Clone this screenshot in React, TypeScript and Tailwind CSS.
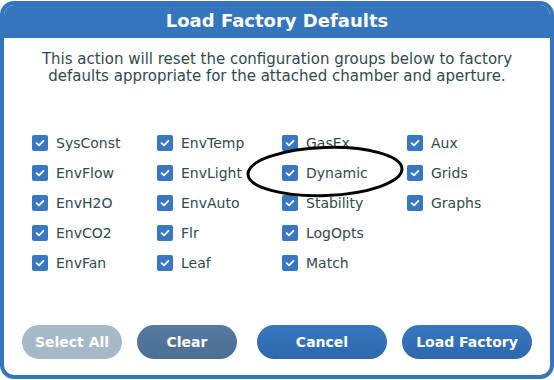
import React from "react";

const cols: string[][] = [
  ["SysConst", "EnvFlow", "EnvH2O", "EnvCO2", "EnvFan"],
  ["EnvTemp", "EnvLight", "EnvAuto", "Flr", "Leaf"],
  ["GasEx", "Dynamic", "Stability", "LogOpts", "Match"],
  ["Aux", "Grids", "Graphs"],
];

function Check({ label }: { label: string }) {
  return (
    <div className="flex items-center h-[30px]">
      <div className="w-[16px] h-[16px] rounded-[2px] bg-[#3877c2] flex items-center justify-center">
        <svg width="12" height="12" viewBox="0 0 12 12">
          <path d="M2.6 6.2 L5 8.4 L9.4 3.8" fill="none" stroke="white" strokeWidth="1.8" strokeLinecap="round" strokeLinejoin="round" />
        </svg>
      </div>
      <span className="ml-[8px] text-[14px] text-[#2f4a50] leading-none">{label}</span>
    </div>
  );
}

export default function App() {
  return (
    <div className="w-[554px] h-[380px] bg-white relative" style={{ fontFamily: "'DejaVu Sans', sans-serif" }}>
      <div className="absolute left-0 top-[1px] w-[554px] h-[378px] border-[4px] border-[#3475bd] rounded-[14px] overflow-hidden flex flex-col bg-white">
        <div className="h-[34px] bg-[#3475bd] flex items-center justify-center -mt-[1px]">
          <span className="text-white font-bold text-[18px] leading-none">Load Factory Defaults</span>
        </div>
        <p className="mt-[13px] text-center text-[15px] leading-[17px] text-[#2f4a50]">
          This action will reset the configuration groups below to factory
          <br />
          defaults appropriate for the attached chamber and aperture.
        </p>
        <div className="mt-[43px] pl-[28px] flex">
          {cols.map((c, i) => (
            <div key={i} className="w-[125px] flex flex-col">
              {c.map((l) => (
                <Check key={l} label={l} />
              ))}
            </div>
          ))}
        </div>
        <div className="mt-auto mb-[16px] pl-[18px] flex items-center">
          <button className="w-[100px] h-[34px] rounded-full bg-[#a6b9c9] text-white font-bold text-[14px]">Select All</button>
          <button className="ml-[15px] w-[100px] h-[34px] rounded-full bg-gradient-to-b from-[#577aa0] to-[#4c6e95] text-white font-bold text-[14px]">Clear</button>
          <button className="ml-[20px] w-[130px] h-[34px] rounded-full bg-gradient-to-b from-[#3777c0] to-[#2d68ad] text-white font-bold text-[14px]">Cancel</button>
          <button className="ml-[15px] w-[130px] h-[34px] rounded-full bg-gradient-to-b from-[#3777c0] to-[#2d68ad] text-white font-bold text-[14px]">Load Factory</button>
        </div>
      </div>
      <svg className="absolute left-0 top-0 pointer-events-none" width="554" height="380">
        <ellipse cx="325" cy="171.5" rx="77" ry="24" fill="none" stroke="black" strokeWidth="3" transform="rotate(-2 325 171.5)" />
      </svg>
    </div>
  );
}
